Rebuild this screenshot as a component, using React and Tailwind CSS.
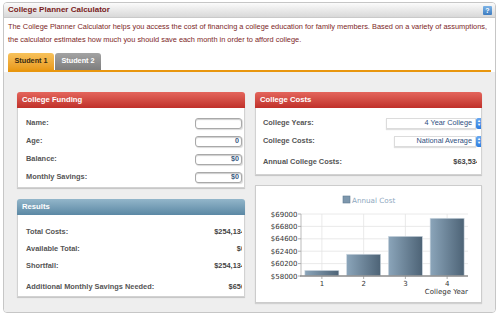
import React from "react";

const labelCls = "text-[7.4px] font-bold text-[#555555]";

const Panel = ({ title, tone = "red", className = "", children }) => {
  const head =
    tone === "red"
      ? "bg-gradient-to-b from-[#e4655c] to-[#c0302a]"
      : "bg-gradient-to-b from-[#93b6ca] to-[#5b88a4]";
  return (
    <div className={"rounded-t-[3px] shadow-[0_1px_1px_rgba(0,0,0,0.18)] " + className}>
      <div className={"h-[16px] rounded-t-[3px] flex items-center px-[5px] text-[7.7px] font-bold text-white " + head}>
        {title}
      </div>
      <div className="bg-white border border-t-0 border-[#d2d2d2]">{children}</div>
    </div>
  );
};

const InputBox = ({ value }) => (
  <div className="w-[47px] h-[11px] rounded-[3px] border border-[#a9a9a9] bg-white shadow-[inset_0_1px_1px_rgba(0,0,0,0.2),1px_1px_1px_rgba(0,0,0,0.15)] flex items-center justify-end pr-[2px] text-[7.2px] font-bold text-[#3b5b82]">
    {value}
  </div>
);

const SelectBox = ({ value, width }) => (
  <div className={"h-[11px] flex items-stretch " + width}>
    <div className="flex-1 bg-white border border-[#dcdcdc] shadow-[0_1px_1px_rgba(0,0,0,0.12)] flex items-center justify-end pr-[3px] text-[7.3px] text-[#2f4f80]">
      {value}
    </div>
    <div className="w-[10px] shrink-0 rounded-[2px] bg-gradient-to-b from-[#6aa8ef] to-[#2d7ee0] flex flex-col items-start justify-center pl-[1px] text-white text-[4px] leading-[4px]">
      <span>▲</span>
      <span>▼</span>
    </div>
  </div>
);

const Row = ({ label, h = "h-[18px]", children, className = "" }) => (
  <div className={"flex items-center justify-between " + h + " " + className}>
    <span className={labelCls}>{label}</span>
    {children}
  </div>
);

// values are cut at the panel's edge in the original widget
const ClipValue = ({ text, w = "w-[40px]" }) => (
  <div className={"overflow-hidden flex justify-end " + w}>
    <span className="text-[7.4px] font-bold text-[#444444] whitespace-nowrap mr-[-3px]">{text}</span>
  </div>
);

const bars = [58990, 61860, 65040, 68244];

const Chart = () => {
  const top = 28;
  const bottom = 90;
  const left = 45;
  const right = 212;
  const min = 58000;
  const max = 69000;
  const y = (v) => bottom - ((v - min) / (max - min)) * (bottom - top);
  const ticks = [69000, 66800, 64600, 62400, 60200, 58000];
  const slot = (right - left) / 4;
  return (
    <svg width="225" height="116" viewBox="0 0 225 116" className="block">
      <defs>
        <linearGradient id="bar" x1="0" x2="1" y1="0" y2="0">
          <stop offset="0" stopColor="#8ba5ba" />
          <stop offset="1" stopColor="#4d6376" />
        </linearGradient>
      </defs>
      <rect x="87" y="10" width="7" height="7" fill="#7d97ad" stroke="#5e7a92" strokeWidth="0.6" />
      <text x="96" y="16.5" fontSize="7.2" fill="#8ea8c0" fontFamily="DejaVu Sans, sans-serif">
        Annual Cost
      </text>
      {ticks.map((t) => (
        <g key={t}>
          <line x1={left} x2={right} y1={y(t)} y2={y(t)} stroke="#e4e4e4" strokeWidth="0.8" />
          <line x1={left - 3} x2={left} y1={y(t)} y2={y(t)} stroke="#999" strokeWidth="0.8" />
          <text x={left - 3.5} y={y(t) + 2.5} fontSize="7" fill="#333" textAnchor="end" fontFamily="DejaVu Sans, sans-serif">
            ${t}
          </text>
        </g>
      ))}
      {bars.map((v, i) => {
        const cx = left + slot * (i + 0.5);
        return (
          <line key={"v" + i} x1={cx} x2={cx} y1={top} y2={bottom} stroke="#e4e4e4" strokeWidth="0.8" />
        );
      })}
      <line x1={left} x2={left} y1={top} y2={bottom} stroke="#aaa" strokeWidth="0.8" />
      {bars.map((v, i) => {
        const cx = left + slot * (i + 0.5);
        return (
          <g key={i}>
            <rect x={cx - 17} y={y(v)} width="34" height={bottom - y(v)} fill="url(#bar)" stroke="#cfd9e2" strokeWidth="0.6" />
            <line x1={cx} x2={cx} y1={bottom} y2={bottom + 3} stroke="#999" strokeWidth="0.8" />
            <text x={cx} y={bottom + 9.5} fontSize="7" fill="#333" textAnchor="middle" fontFamily="DejaVu Sans, sans-serif">
              {i + 1}
            </text>
          </g>
        );
      })}
      <line x1={left - 1} x2={right} y1={bottom} y2={bottom} stroke="#8f8f8f" strokeWidth="1.6" />
      <text x={right} y={bottom + 18} fontSize="7" fill="#333" textAnchor="end" fontFamily="DejaVu Sans, sans-serif">
        College Year
      </text>
    </svg>
  );
};

export default function App() {
  return (
    <div className="w-[500px] h-[317px] bg-white pt-[2px] pl-[3px] pr-[4px] font-['Liberation_Sans',Arial,sans-serif]">
      <div className="h-[311px] border border-[#c6c6c6] rounded-[4px] overflow-hidden flex flex-col">
        {/* title bar */}
        <div className="h-[15px] shrink-0 bg-gradient-to-b from-[#fbfbfb] to-[#d8d8d8] border-b border-[#c9c9c9] flex items-center justify-between pl-[4px] pr-[3px]">
          <span className="text-[8px] font-bold text-[#7a1c1c]">College Planner Calculator</span>
          <span className="w-[9px] h-[9px] rounded-[1px] bg-gradient-to-b from-[#7db3e6] to-[#3d7cc0] text-white text-[7px] font-bold leading-[9px] text-center">
            ?
          </span>
        </div>

        {/* intro */}
        <div className="px-[4px] pt-[2px] text-[7.4px] leading-[13px] text-[#7d2626] whitespace-nowrap">
          <p>
            The College Planner Calculator helps you access the cost of financing a college education for family members. Based on a variety of assumptions,
          </p>
          <p>the calculator estimates how much you should save each month in order to afford college.</p>
        </div>

        {/* tabs */}
        <div className="mt-[7px] px-[4px]">
          <div className="flex gap-[1px] h-[17px]">
            <div className="w-[46px] rounded-t-[3px] bg-gradient-to-b from-[#f7c25a] to-[#e99a16] flex items-center justify-center text-[7.3px] font-bold text-[#3a2a10]">
              Student 1
            </div>
            <div className="w-[46px] rounded-t-[3px] bg-gradient-to-b from-[#a3a3a3] to-[#7e7e7e] flex items-center justify-center text-[7.3px] font-bold text-white">
              Student 2
            </div>
          </div>
          <div className="h-[2px] bg-[#e8960e]" />
        </div>

        {/* content */}
        <div className="flex-1 bg-[#eeeeee] pt-[20px] px-[13px] flex gap-[10px]">
          <div className="w-[228px] flex flex-col">
            <Panel title="College Funding">
              <div className="h-[79px] pt-[6px] pl-[8px] pr-[2px]">
                <Row label="Name:">
                  <InputBox value="" />
                </Row>
                <Row label="Age:">
                  <InputBox value="0" />
                </Row>
                <Row label="Balance:">
                  <InputBox value="$0" />
                </Row>
                <Row label="Monthly Savings:">
                  <InputBox value="$0" />
                </Row>
              </div>
            </Panel>

            <Panel title="Results" tone="blue" className="mt-[11px]">
              <div className="h-[81px] pt-[8px] pl-[8px] pr-[2px]">
                <Row label="Total Costs:" h="h-[17px]">
                  <ClipValue text="$254,134" />
                </Row>
                <Row label="Available Total:" h="h-[17px]">
                  <ClipValue text="$0" />
                </Row>
                <Row label="Shortfall:" h="h-[17px]">
                  <ClipValue text="$254,134" />
                </Row>
                <Row label="Additional Monthly Savings Needed:" h="h-[17px]" className="mt-[4px]">
                  <ClipValue text="$656" />
                </Row>
              </div>
            </Panel>
          </div>

          <div className="w-[227px] flex flex-col">
            <Panel title="College Costs">
              <div className="h-[66px] pt-[6px] pl-[7px] overflow-hidden">
                <Row label="College Years:">
                  <SelectBox value="4 Year College" width="w-[100px] mr-[-5px]" />
                </Row>
                <Row label="College Costs:">
                  <SelectBox value="National Average" width="w-[92px] mr-[-5px]" />
                </Row>
                <Row label="Annual College Costs:" className="mt-[3px] pr-[4px]">
                  <ClipValue text="$63,534" />
                </Row>
              </div>
            </Panel>

            <div className="mt-[10px] h-[118px] bg-white border border-[#cccccc] shadow-[0_1px_1px_rgba(0,0,0,0.12)]">
              <Chart />
            </div>
          </div>
        </div>
      </div>
    </div>
  );
}
